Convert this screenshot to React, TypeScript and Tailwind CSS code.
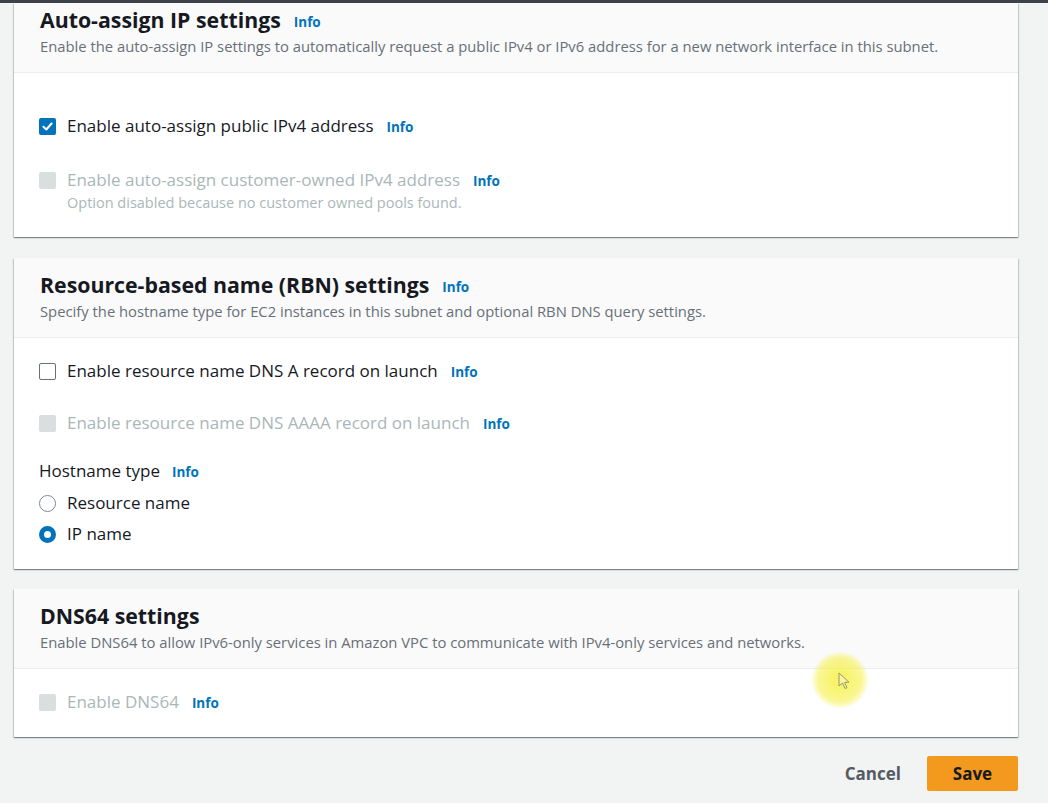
import React from "react";

const font = { fontFamily: '"Open Sans", "Noto Sans", sans-serif' };

function Info({ className = "" }: { className?: string }) {
  return (
    <span className={`text-[13.5px] font-bold leading-[18px] text-[#0073bb] ${className}`}>
      Info
    </span>
  );
}

function CheckBox({ state }: { state: "checked" | "empty" | "disabled" }) {
  if (state === "checked") {
    return (
      <span className="flex h-[17px] w-[17px] shrink-0 items-center justify-center rounded-[2px] bg-[#0073bb]">
        <svg width="13" height="13" viewBox="0 0 12 12" fill="none">
          <path
            d="M2.2 6.2 L4.9 8.8 L9.8 3.2"
            stroke="white"
            strokeWidth="1.9"
            strokeLinecap="round"
            strokeLinejoin="round"
          />
        </svg>
      </span>
    );
  }
  if (state === "disabled") {
    return <span className="block h-[17px] w-[17px] shrink-0 rounded-[2px] bg-[#d9dede]" />;
  }
  return (
    <span className="block h-[17px] w-[17px] shrink-0 rounded-[2px] border border-[#687078] bg-white" />
  );
}

function Radio({ checked }: { checked?: boolean }) {
  return checked ? (
    <span className="block h-[17px] w-[17px] shrink-0 rounded-full border-[5px] border-[#0073bb] bg-white" />
  ) : (
    <span className="block h-[17px] w-[17px] shrink-0 rounded-full border border-[#7d8998] bg-white" />
  );
}

function CheckRow({
  state,
  label,
  hint,
}: {
  state: "checked" | "empty" | "disabled";
  label: string;
  hint?: string;
}) {
  const off = state === "disabled";
  return (
    <div>
      <div className="flex h-[22px] items-center">
        <CheckBox state={state} />
        <span
          className={`ml-[11px] whitespace-nowrap text-[17px] leading-[22px] ${
            off ? "text-[#aab7b8]" : "text-[#16191f]"
          }`}
        >
          {label}
        </span>
        <Info className="ml-[13px] mt-[2px]" />
      </div>
      {hint && (
        <p className="mt-[3px] pl-[28px] text-[14.5px] leading-[18px] text-[#aab7b8]">
          {hint}
        </p>
      )}
    </div>
  );
}

function CardHeader({
  title,
  desc,
  info = true,
  pt = "pt-[14px]",
}: {
  title: string;
  desc: string;
  info?: boolean;
  pt?: string;
}) {
  return (
    <div className={`border-b border-[#eaeded] bg-[#fafafa] px-[26px] ${pt}`}>
      <div className="flex h-[26px] items-center">
        <h2 className="whitespace-nowrap text-[21.3px] font-bold leading-[26px] text-[#16191f]">
          {title}
        </h2>
        {info && <Info className="ml-[13px] mt-[4px]" />}
      </div>
      <p className="mt-[4px] whitespace-nowrap pb-[17px] text-[14.8px] leading-[18px] text-[#687078]">
        {desc}
      </p>
    </div>
  );
}

const cardCls =
  "ml-[14px] w-[1004px] bg-white shadow-[0_1px_1px_0_rgba(0,28,36,0.3),1px_1px_1px_0_rgba(0,28,36,0.15),-1px_1px_1px_0_rgba(0,28,36,0.15)]";

export default function App() {
  return (
    <div className="relative h-[803px] w-[1048px] overflow-hidden bg-[#f2f3f3]" style={font}>
      <div className="h-[3px] bg-[#3d424a]" />

      <section className={cardCls}>
        <CardHeader
          pt="pt-[4px]"
          title="Auto-assign IP settings"
          desc="Enable the auto-assign IP settings to automatically request a public IPv4 or IPv6 address for a new network interface in this subnet."
        />
        <div className="flex flex-col gap-[32px] px-[25px] pb-[25px] pt-[42px]">
          <CheckRow state="checked" label="Enable auto-assign public IPv4 address" />
          <CheckRow
            state="disabled"
            label="Enable auto-assign customer-owned IPv4 address"
            hint="Option disabled because no customer owned pools found."
          />
        </div>
      </section>

      <section className={`${cardCls} mt-[21px]`}>
        <CardHeader
          title="Resource-based name (RBN) settings"
          desc="Specify the hostname type for EC2 instances in this subnet and optional RBN DNS query settings."
        />
        <div className="px-[25px] pb-[24px] pt-[22px]">
          <CheckRow state="empty" label="Enable resource name DNS A record on launch" />
          <div className="mt-[30px]">
            <CheckRow state="disabled" label="Enable resource name DNS AAAA record on launch" />
          </div>
          <div className="mt-[26px] flex h-[22px] items-center">
            <span className="text-[17px] leading-[22px] text-[#16191f]">Hostname type</span>
            <Info className="ml-[12px] mt-[2px]" />
          </div>
          <div className="mt-[10px] flex flex-col gap-[9px]">
            <label className="flex h-[22px] items-center">
              <Radio />
              <span className="ml-[11px] text-[17px] leading-[22px] text-[#16191f]">
                Resource name
              </span>
            </label>
            <label className="flex h-[22px] items-center">
              <Radio checked />
              <span className="ml-[11px] text-[17px] leading-[22px] text-[#16191f]">IP name</span>
            </label>
          </div>
        </div>
      </section>

      <section className={`${cardCls} mt-[20px]`}>
        <CardHeader
          info={false}
          title="DNS64 settings"
          desc="Enable DNS64 to allow IPv6-only services in Amazon VPC to communicate with IPv4-only services and networks."
        />
        <div className="px-[25px] pb-[24px] pt-[22px]">
          <CheckRow state="disabled" label="Enable DNS64" />
        </div>
      </section>

      <div className="ml-[14px] mt-[19px] flex w-[1004px] items-center justify-end">
        <button className="mr-[26px] text-[17px] font-bold text-[#545b64]">Cancel</button>
        <button className="h-[35px] w-[91px] rounded-[2px] bg-[#f39a1e] text-[17px] font-bold text-[#16191f]">
          Save
        </button>
      </div>

      {/* cursor highlight from the recording */}
      <div className="pointer-events-none absolute left-[812px] top-[652px] h-[56px] w-[56px] rounded-full bg-[radial-gradient(circle,rgba(245,240,60,0.85)_0%,rgba(245,240,60,0.55)_55%,rgba(245,240,60,0)_75%)]" />
      <svg
        className="pointer-events-none absolute left-[838px] top-[672px]"
        width="12"
        height="18"
        viewBox="0 0 12 18"
      >
        <path d="M1 1 L1 14 L4.5 11 L7 16.5 L9 15.6 L6.6 10.4 L11 10.2 Z" fill="#f7f3a0" stroke="#9a9a6a" strokeWidth="1" />
      </svg>
    </div>
  );
}
